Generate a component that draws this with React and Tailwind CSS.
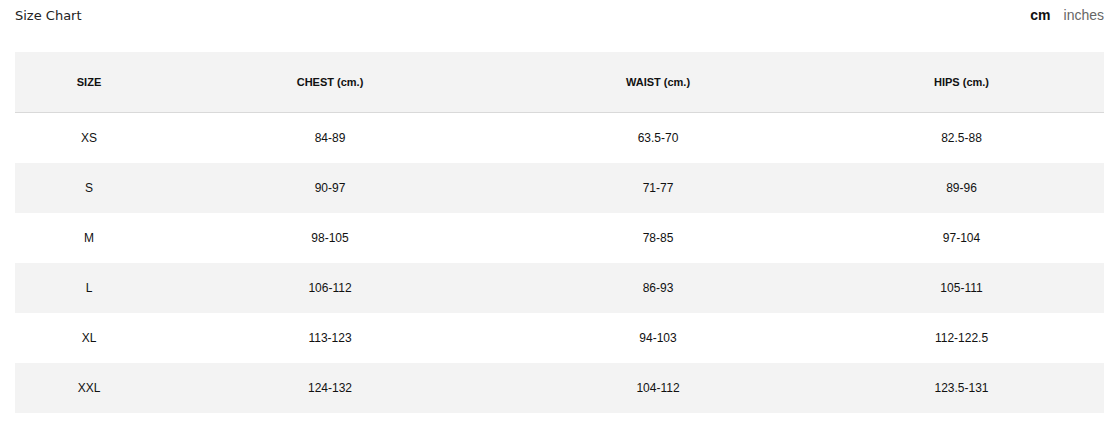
const rows = [
  ["XS", "84-89", "63.5-70", "82.5-88"],
  ["S", "90-97", "71-77", "89-96"],
  ["M", "98-105", "78-85", "97-104"],
  ["L", "106-112", "86-93", "105-111"],
  ["XL", "113-123", "94-103", "112-122.5"],
  ["XXL", "124-132", "104-112", "123.5-131"],
];

const cols = ["w-[148px]", "w-[334px]", "w-[322px]", "flex-1"];

export default function App() {
  return (
    <div className="w-[1118px] h-[422px] bg-white text-[#111] font-['Liberation_Sans',Arial,sans-serif] overflow-hidden">
      {/* Title bar */}
      <div className="flex items-center justify-between pl-[15px] pr-[14px] h-[31px]">
        <h2 className="font-['DejaVu_Sans',Verdana,sans-serif] text-[13px] text-[#222]">Size Chart</h2>
        <div className="flex items-center gap-[13px] text-[14px]">
          <span className="font-bold text-[#111]">cm</span>
          <span className="text-[#666]">inches</span>
        </div>
      </div>

      {/* Table */}
      <div className="mx-[15px] mt-[21px] w-[1089px]">
        <div className="flex h-[61px] items-center bg-[#f3f3f3] border-b border-[#d9d9d9] text-[11px] font-semibold">
          {["SIZE", "CHEST (cm.)", "WAIST (cm.)", "HIPS (cm.)"].map((h, i) => (
            <div key={h} className={`${cols[i]} text-center`}>{h}</div>
          ))}
        </div>
        {rows.map((r, ri) => (
          <div
            key={r[0]}
            className={`flex h-[50px] items-center text-[12px] ${ri % 2 === 1 ? "bg-[#f3f3f3]" : "bg-white"}`}
          >
            {r.map((c, i) => (
              <div key={i} className={`${cols[i]} text-center`}>{c}</div>
            ))}
          </div>
        ))}
      </div>
    </div>
  );
}
